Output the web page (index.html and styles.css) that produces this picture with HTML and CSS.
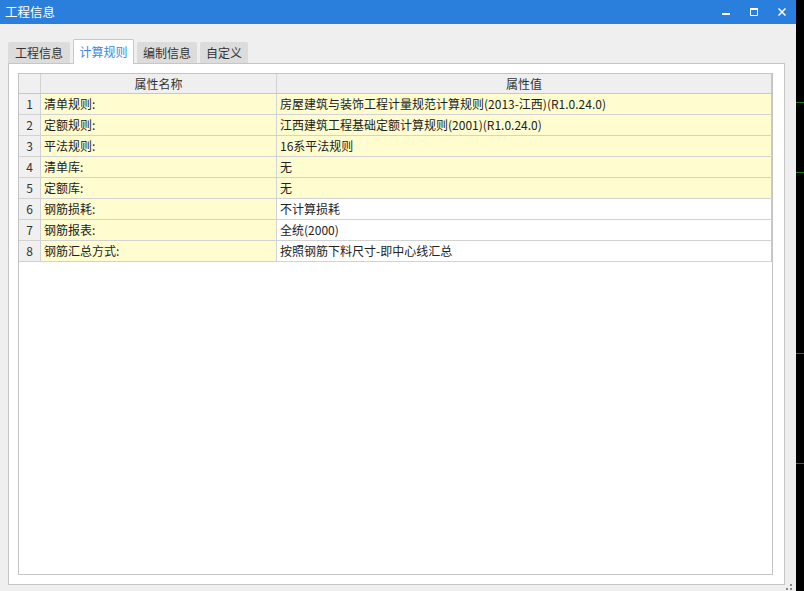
FILE: index.html
```html
<!DOCTYPE html>
<html lang="zh-CN">
<head>
<meta charset="utf-8">
<title>工程信息</title>
<link rel="stylesheet" href="styles.css">
</head>
<body>
<div class="screen">
  <div class="dialog">
    <div class="titlebar">
      <span class="title">工程信息</span>
      <div class="controls">
        <span class="ctl"><svg width="8" height="8" viewBox="0 0 8 8"><rect x="0" y="5" width="8" height="2" fill="#fff"/></svg></span>
        <span class="ctl"><svg width="8" height="8" viewBox="0 0 8 8"><path d="M0.5 1.5H7.5V7.5H0.5Z" fill="none" stroke="#fff" stroke-width="1"/><rect x="0" y="0" width="8" height="2" fill="#fff"/></svg></span>
        <span class="ctl"><svg width="8" height="8" viewBox="0 0 8 8"><path d="M0.5 0.5L7.5 7.5M7.5 0.5L0.5 7.5" stroke="#fff" stroke-width="1.5"/></svg></span>
      </div>
    </div>
    <div class="content">
      <div class="tabs">
        <span class="tab t1">工程信息</span>
        <span class="tab active">计算规则</span>
        <span class="tab t3">编制信息</span>
        <span class="tab t4">自定义</span>
      </div>
      <div class="panel">
        <div class="grid">
          <div class="cell num head"></div>
          <div class="cell head">属性名称</div>
          <div class="cell head last">属性值</div>

          <div class="cell num">1</div>
          <div class="cell name">清单规则:</div>
          <div class="cell val hl last">房屋建筑与装饰工程计量规范计算规则(2013-江西)(R1.0.24.0)</div>

          <div class="cell num">2</div>
          <div class="cell name">定额规则:</div>
          <div class="cell val hl last">江西建筑工程基础定额计算规则(2001)(R1.0.24.0)</div>

          <div class="cell num">3</div>
          <div class="cell name">平法规则:</div>
          <div class="cell val hl last">16系平法规则</div>

          <div class="cell num">4</div>
          <div class="cell name">清单库:</div>
          <div class="cell val hl last">无</div>

          <div class="cell num">5</div>
          <div class="cell name">定额库:</div>
          <div class="cell val hl last">无</div>

          <div class="cell num">6</div>
          <div class="cell name">钢筋损耗:</div>
          <div class="cell val last">不计算损耗</div>

          <div class="cell num">7</div>
          <div class="cell name">钢筋报表:</div>
          <div class="cell val last">全统(2000)</div>

          <div class="cell num">8</div>
          <div class="cell name">钢筋汇总方式:</div>
          <div class="cell val last">按照钢筋下料尺寸-即中心线汇总</div>
        </div>
      </div>
      <div class="footer">
        <svg class="grip" width="6" height="6" viewBox="0 0 6 6"><rect x="4" y="0" width="2" height="2" fill="#8a8a8a"/><rect x="0" y="4" width="2" height="2" fill="#8a8a8a"/><rect x="4" y="4" width="2" height="2" fill="#8a8a8a"/></svg>
      </div>
    </div>
  </div>
  <div class="strip"></div>
</div>
</body>
</html>
```

FILE: styles.css
```css
* { box-sizing: border-box; }
html, body { margin: 0; padding: 0; background: #000; }
body {
  font-family: "Noto Sans CJK SC", "Noto Sans", "Liberation Sans", sans-serif;
  font-size: 12px;
  color: #222;
}
.screen { display: flex; width: 804px; height: 591px; overflow: hidden; }
.dialog { width: 796px; height: 591px; display: flex; flex-direction: column; background: #efefef; }
.titlebar {
  height: 24px; flex: none; background: #2b7fdc; color: #fff;
  display: flex; align-items: center; justify-content: space-between;
}
.title { padding-left: 5px; font-size: 12.5px; line-height: 24px; }
.controls { display: flex; height: 24px; }
.ctl { width: 28px; height: 24px; display: flex; align-items: center; justify-content: center; }
.ctl svg { display: block; margin-top: -1px; }

.content { flex: 1; display: flex; flex-direction: column; padding: 15px 11px 0 8px; }
.tabs { height: 24px; display: flex; align-items: flex-end; gap: 3px; position: relative; z-index: 1; }
.tab {
  height: 21px; padding: 0; background: #dcdcdc; color: #333; white-space: nowrap;
  border-radius: 2px 2px 0 0; line-height: 21px; text-align: center; flex: none;
}
.tab.t1 { width: 62px; }
.tab.t3 { width: 60px; }
.tab.t4 { width: 48px; }
.tab.active {
  height: 25px; width: 61px; margin-bottom: -1px; background: #fff; color: #3a86e6;
  border: 1px solid #c8c8c8; border-bottom: none; line-height: 23px;
}

.panel {
  height: 522px; flex: none; background: #fff; border: 1px solid #c6c6c6;
  padding: 9px 11px 9px 9px;
}
.grid {
  height: 502px; width: 755px; border: 1px solid #c4c4c4; background: #fff;
  display: grid; grid-template-columns: 22px 236px 495px;
  grid-auto-rows: 21px; grid-template-rows: 20px; align-content: start;
}
.cell {
  border-right: 1px solid #d2d2d2; border-bottom: 1px solid #d2d2d2;
  line-height: 20px; white-space: nowrap; overflow: hidden; padding-left: 3px;
}
.cell.last { border-right-color: #c8c8c8; }
.head { background: #efefef; text-align: center; line-height: 19px; color: #333; padding-left: 0; border-bottom-color: #c8c8c8; }
.num { background: #f0f0f0; text-align: center; padding-left: 0; color: #333; }
.name { background: #fffdd0; }
.val { background: #fff; }
.val.hl { background: #fffdd0; }

.footer { height: 6px; display: flex; justify-content: flex-end; align-items: flex-end; padding-right: 4px; margin-right: -11px; }
.grip { display: block; margin-bottom: 1px; }

.strip {
  width: 8px; height: 591px;
  background: linear-gradient(to bottom,
    #000 0, #000 102px, #1c7a1c 102px, #1c7a1c 103px, #000 103px,
    #000 172px, #1c7a1c 172px, #1c7a1c 173px, #000 173px,
    #000 353px, #1c7a1c 353px, #1c7a1c 354px, #000 354px,
    #000 463px, #1c7a1c 463px, #1c7a1c 464px, #000 464px, #000 591px);
}
```
